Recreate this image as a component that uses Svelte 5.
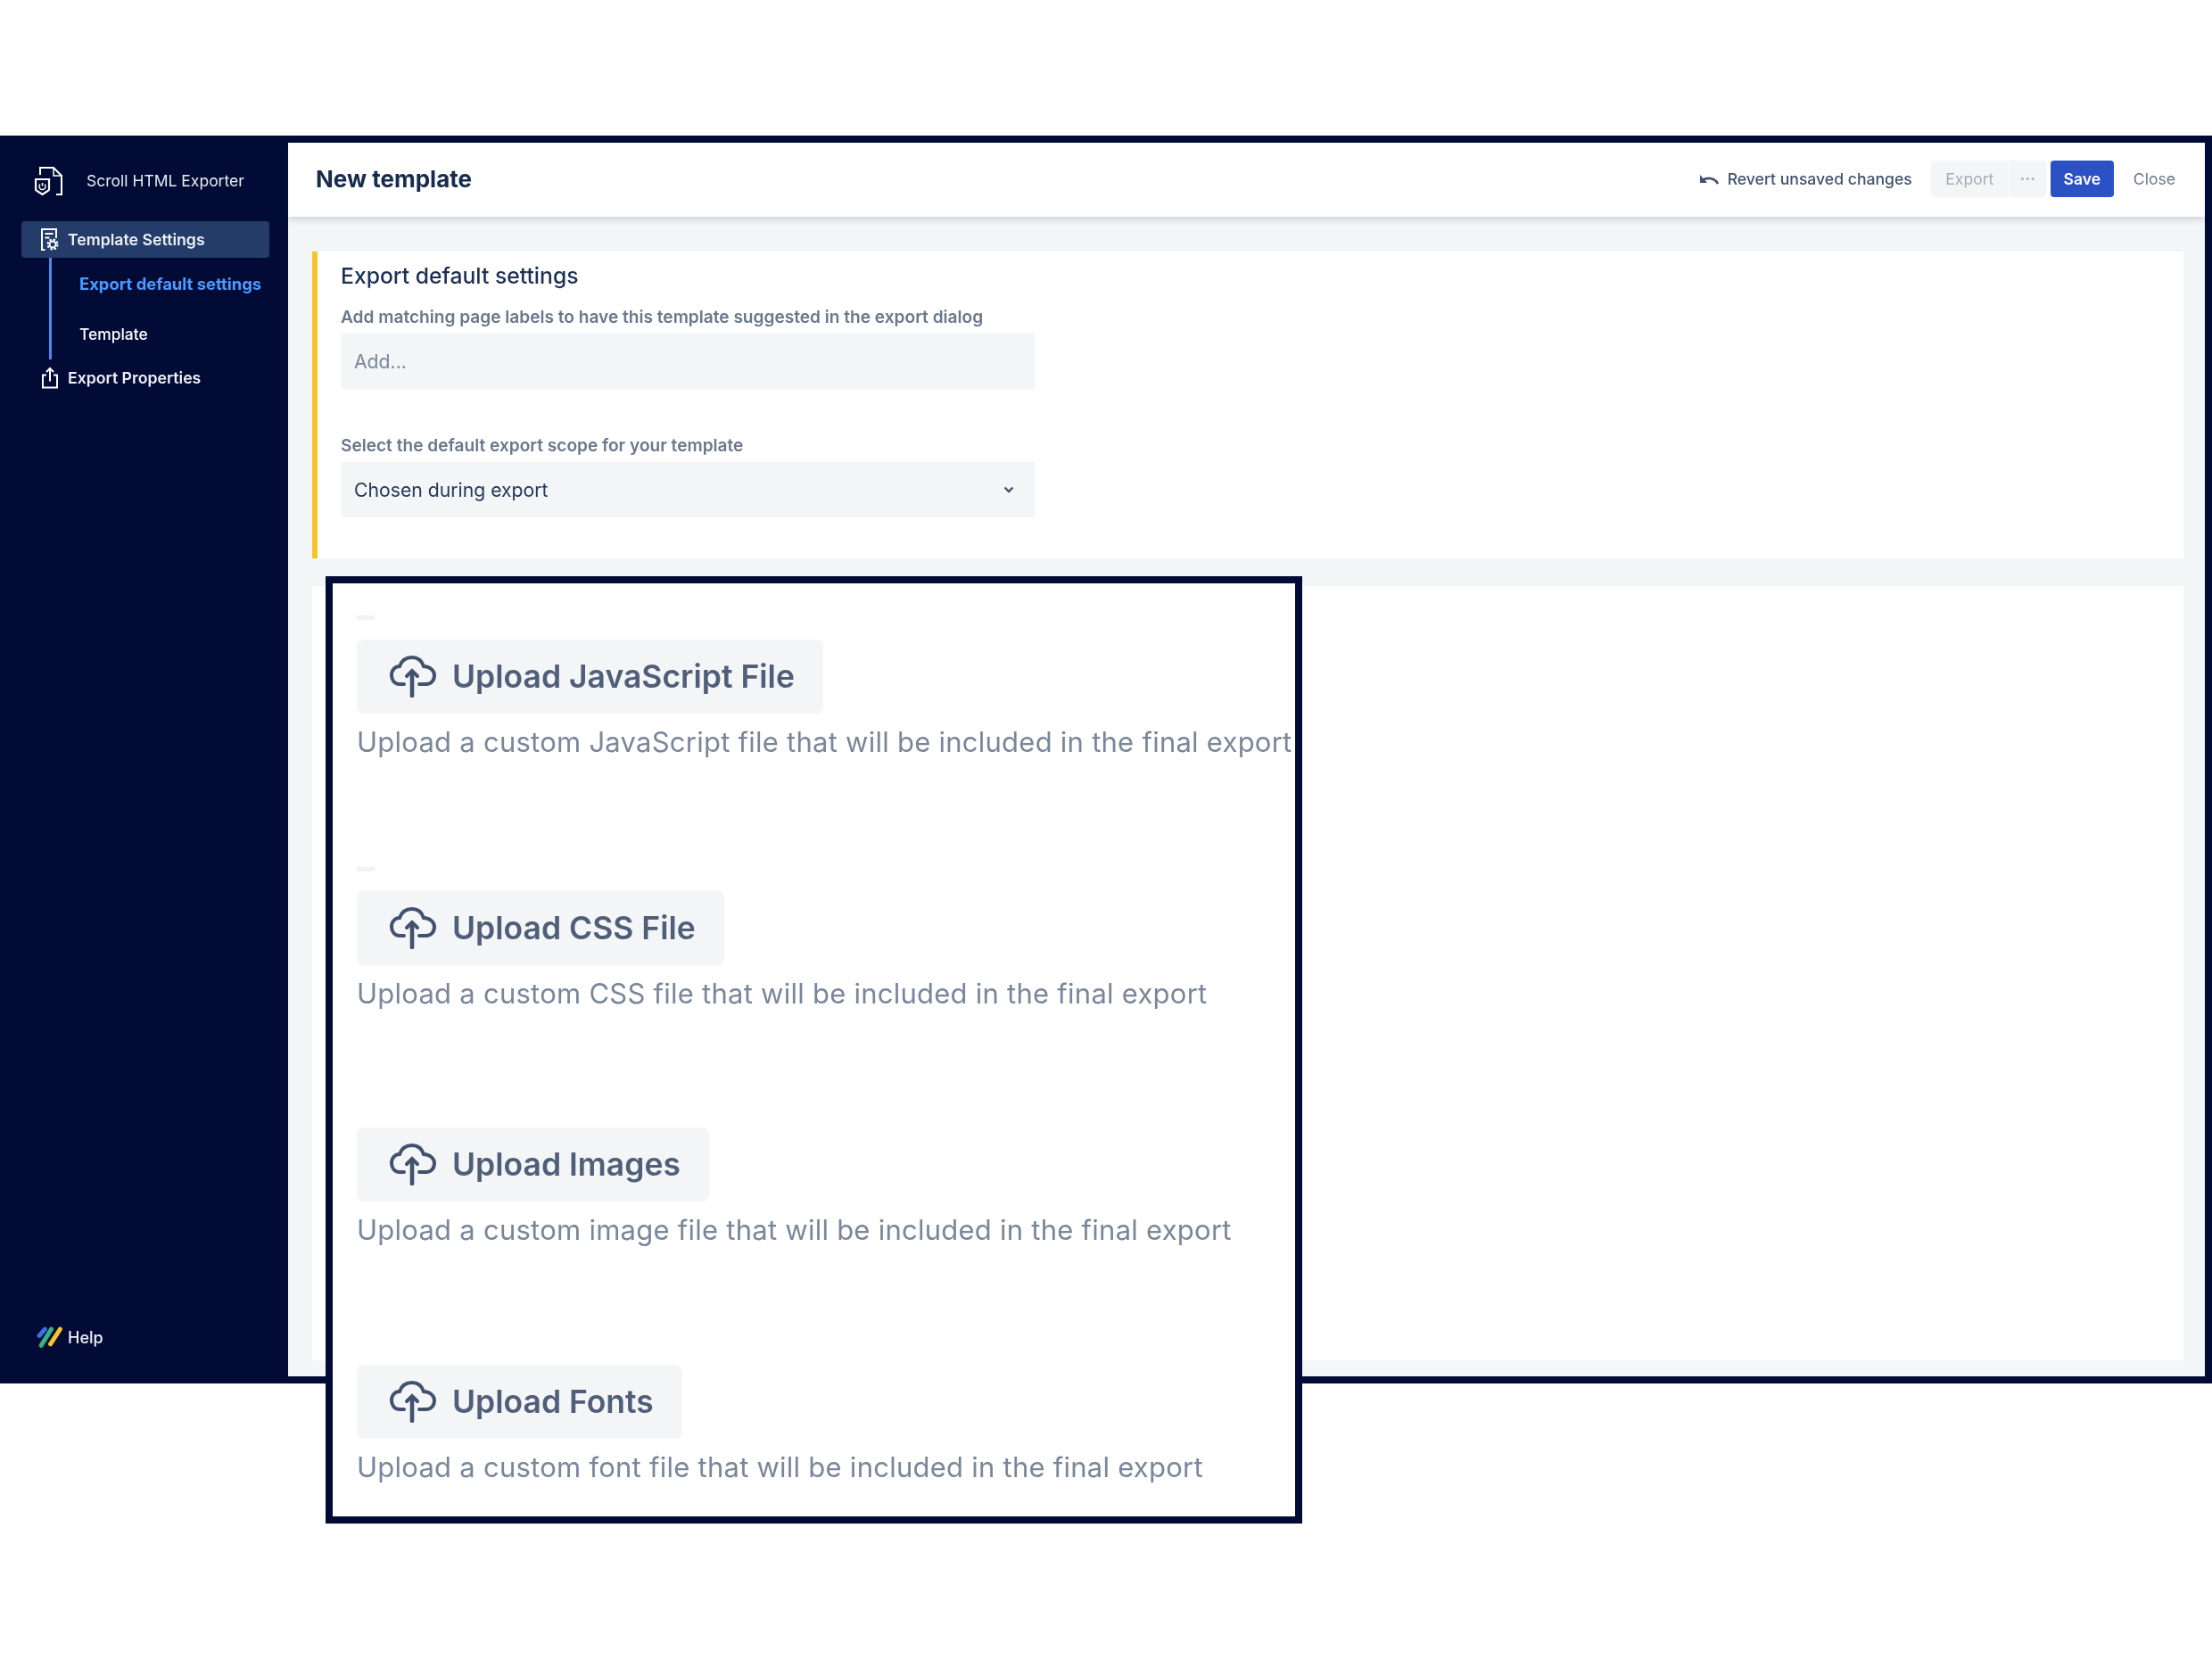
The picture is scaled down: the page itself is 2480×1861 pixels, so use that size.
<script>
  const uploads = [
    { label: 'Upload JavaScript File', desc: 'Upload a custom JavaScript file that will be included in the final export', dash: true, cls: 'first' },
    { label: 'Upload CSS File', desc: 'Upload a custom CSS file that will be included in the final export', dash: true, cls: 'second' },
    { label: 'Upload Images', desc: 'Upload a custom image file that will be included in the final export', dash: false, cls: 'third' },
    { label: 'Upload Fonts', desc: 'Upload a custom font file that will be included in the final export', dash: false, cls: 'fourth' }
  ];
</script>

<div class="page">
  <div class="frame">
    <aside class="sidebar">
      <div class="brand">
        <svg class="logo" viewBox="0 0 32 34" fill="none" stroke="#fff" stroke-width="2">
          <path d="M6 10V2h15l9 9v21h-6" />
          <path d="M21 2v9h9" stroke-width="1.500" />
          <path d="M1 15h15v11a2 2 0 0 1-1.500 2l-6 4-6-4a2 2 0 0 1-1.500-2z" stroke-width="2.200" />
          <path d="M8.500 19v3.500M6 20.500a3.500 3.500 0 1 0 5 0" stroke-width="1.500" />
        </svg>
        <span>Scroll HTML Exporter</span>
      </div>
      <div class="nav-item active">
        <svg class="nav-icon" viewBox="0 0 20 25" fill="none" stroke="#fff" stroke-width="2">
          <path d="M4.500 24H1V1h16v10" />
          <path d="M4.500 6h9M4.500 10.500h5" />
          <circle cx="13" cy="18" r="3.500" />
          <circle cx="13" cy="18" r="5.500" stroke-dasharray="2.500 1.800" stroke-width="2" />
        </svg>
        <span>Template Settings</span>
      </div>
      <div class="sub">
        <div class="sub-item current">Export default settings</div>
        <div class="sub-item">Template</div>
      </div>
      <div class="nav-item">
        <svg class="nav-icon" viewBox="0 0 20 24" fill="none" stroke="#fff" stroke-width="2">
          <path d="M6 9H2v14h16V9h-4" />
          <path d="M10 16V2M6 5.500 10 1.500l4 4" />
        </svg>
        <span>Export Properties</span>
      </div>
      <div class="help">
        <svg class="help-logo" viewBox="0 0 28 23" fill="none" stroke-width="4.800" stroke-linecap="round">
          <path d="M9 3 3 10" stroke="#3d6ee8" />
          <path d="M16 3 5 20.500" stroke="#36b37e" />
          <path d="M25.500 3 15 19" stroke="#f6c42d" />
        </svg>
        <span>Help</span>
      </div>
    </aside>
    <main class="main">
      <header class="topbar">
        <h1>New template</h1>
        <div class="actions">
          <svg class="revert" viewBox="0 0 22 13" fill="none" stroke="#42526e" stroke-width="2.800">
            <path d="M21 12C18 6 10 4 4 8" />
            <path d="M1 2v9h8z" stroke="none" fill="#42526e" />
          </svg>
          <span class="revert-text">Revert unsaved changes</span>
          <div class="group">
            <span class="export">Export</span>
            <span class="more">···</span>
          </div>
          <span class="save">Save</span>
          <span class="close">Close</span>
        </div>
      </header>
      <div class="body">
        <section class="card settings">
          <h2>Export default settings</h2>
          <div class="label">Add matching page labels to have this template suggested in the export dialog</div>
          <div class="field placeholder">Add...</div>
          <div class="label second-label">Select the default export scope for your template</div>
          <div class="field value">
            <span>Chosen during export</span>
            <svg class="chevron" viewBox="0 0 12 8" fill="none" stroke="#42526e" stroke-width="2.400"><path d="M1.500 1.500 6 6l4.500-4.500" /></svg>
          </div>
        </section>
        <section class="card rest"></section>
      </div>
    </main>
  </div>

  <div class="overlay">
    {#each uploads as u}
      <div class="block {u.cls}">
        {#if u.dash}<div class="dash"></div>{/if}
        <div class="upload">
          <svg class="cloud" viewBox="0 0 52 47" fill="none" stroke="#42526e" stroke-width="4" stroke-linecap="round">
            <path d="M16 32H11C5 32 2 27 2 22 2 16 6 12 11 12 13 6 18 2 25 2 32 2 36 6 38 12 45 12 50 17 50 22 50 28 46 32 41 32H33" />
            <path d="M25 45V18" stroke-width="4.600" />
            <path d="M19 23l6-6 6 6" stroke-width="4" />
          </svg>
          <span>{u.label}</span>
        </div>
        <div class="desc">{u.desc}</div>
      </div>
    {/each}
  </div>
</div>

<style>
  :global(body) { margin: 0; background: #fff; }
  .page {
    position: relative;
    width: 2480px;
    height: 1861px;
    padding-top: 152px;
    box-sizing: border-box;
    font-family: Inter, "Liberation Sans", sans-serif;
    background: #fff;
    overflow: hidden;
  }
  .frame {
    display: flex;
    height: 1399px;
    box-sizing: border-box;
    padding: 8px 8px 8px 0;
    background: #010b36;
  }
  .sidebar {
    position: relative;
    width: 323px;
    flex: none;
    display: flex;
    flex-direction: column;
    color: #fff;
    filter: blur(0.5px);
  }
  .brand {
    display: flex;
    align-items: center;
    height: 34px;
    margin: 26px 0 0 39px;
    font-size: 17.5px;
    color: #e9ebf0;
  }
  .brand span { position: relative; top: -1px; }
  .logo { width: 32px; height: 34px; margin-right: 26px; flex: none; }
  .nav-item {
    display: flex;
    align-items: center;
    height: 41px;
    margin: 0 21px 0 24px;
    padding-left: 22px;
    border-radius: 4px;
    font-size: 17.7px;
    font-weight: 600;
    color: #eef0f4;
  }
  .nav-item.active { background: #233c69; margin-top: 28px; }
  .nav-icon { width: 20px; height: 25px; margin-right: 10px; flex: none; }
  .sub {
    margin-left: 55px;
    border-left: 3px solid #4a8ae8;
    height: 114px;
    box-sizing: border-box;
    padding-left: 31px;
  }
  .sub-item {
    height: 57px;
    display: flex;
    align-items: center;
    font-size: 17.4px;
    font-weight: 500;
    color: #fff;
  }
  .sub-item.current { color: #4c9aff; font-weight: 700; font-size: 18.4px; }
  .help {
    position: absolute;
    left: 41px;
    top: 1327px;
    display: flex;
    align-items: center;
    gap: 6px;
    font-size: 18px;
    font-weight: 500;
    color: #eef0f4;
  }
  .help-logo { width: 29px; height: 24px; }
  .main {
    flex: 1;
    display: flex;
    flex-direction: column;
    min-width: 0;
    background: #f3f6f7;
  }
  .topbar {
    height: 83px;
    flex: none;
    box-sizing: border-box;
    background: #fff;
    box-shadow: 0 2px 8px rgba(9, 30, 66, 0.2);
    display: flex;
    align-items: center;
    justify-content: space-between;
    padding: 0 33px 3px 31px;
    position: relative;
  }
  h1 { margin: 0; font-size: 26px; font-weight: 700; color: #172b4d; filter: blur(0.4px); }
  .actions { display: flex; align-items: center; font-size: 17.6px; filter: blur(0.4px); }
  .revert { width: 22px; height: 13px; margin-right: 10px; }
  .revert-text { color: #42526e; margin-right: 21px; font-weight: 500; }
  .group {
    display: flex;
    height: 41px;
    width: 129px;
    border-radius: 4px;
    background: #f4f5f7;
    color: #a5adba;
    margin-right: 5px;
  }
  .export {
    width: 87px;
    display: flex;
    align-items: center;
    justify-content: center;
    border-right: 1px solid #fff;
  }
  .more { flex: 1; display: flex; align-items: center; justify-content: center; font-weight: 700; }
  .save {
    width: 71px;
    height: 41px;
    background: #2c51c5;
    color: #fff;
    font-weight: 600;
    border-radius: 4px;
    display: flex;
    align-items: center;
    justify-content: center;
    margin-right: 22px;
  }
  .close { color: #6b778c; }
  .body {
    flex: 1;
    display: flex;
    flex-direction: column;
    gap: 31px;
    padding: 39px 24px 18px 27px;
    min-height: 0;
  }
  .card { background: #fff; }
  .settings {
    height: 344px;
    box-sizing: border-box;
    border-left: 6px solid #f6c42d;
    padding: 14px 0 0 26px;
  }
  .rest { flex: 1; }
  h2 { margin: 0; font-size: 24.7px; line-height: 26px; font-weight: 500; color: #1d3054; filter: blur(0.4px); }
  .label {
    margin-top: 22px;
    font-size: 19.1px;
    line-height: 22px;
    font-weight: 600;
    color: #6b778c;
    filter: blur(0.4px);
  }
  .second-label { margin-top: 52px; }
  .field {
    width: 779px;
    height: 62px;
    margin-top: 8px;
    box-sizing: border-box;
    padding: 0 24px 0 15px;
    background: #f3f5f7;
    border-radius: 4px;
    display: flex;
    align-items: center;
    justify-content: space-between;
    font-size: 21.2px;
    filter: blur(0.4px);
  }
  .placeholder { color: #7a869a; }
  .value { color: #253858; }
  .chevron { width: 12px; height: 8px; }
  .overlay {
    position: absolute;
    left: 365px;
    top: 646px;
    width: 1095px;
    height: 1062px;
    box-sizing: border-box;
    border: 8px solid #010b36;
    background: #fff;
    padding: 36px 0 0 27px;
  }
  .dash { width: 20px; height: 5px; background: #f1f2f4; margin-bottom: 22px; }
  .upload {
    display: inline-flex;
    align-items: center;
    vertical-align: top;
    height: 83px;
    box-sizing: border-box;
    padding: 0 32px 0 37px;
    background: #f4f5f7;
    border-radius: 8px;
    gap: 18px;
    font-size: 35.5px;
    font-weight: 600;
    color: #505f79;
    filter: blur(0.7px);
  }
  .cloud { width: 52px; height: 47px; }
  .desc {
    margin-top: 10px;
    font-size: 31px;
    line-height: 44px;
    letter-spacing: 0.25px;
    color: #7a869a;
    white-space: nowrap;
    filter: blur(0.7px);
  }
  .second { margin-top: 118px; }
  .third { margin-top: 128px; }
  .fourth { margin-top: 129px; }
</style>
